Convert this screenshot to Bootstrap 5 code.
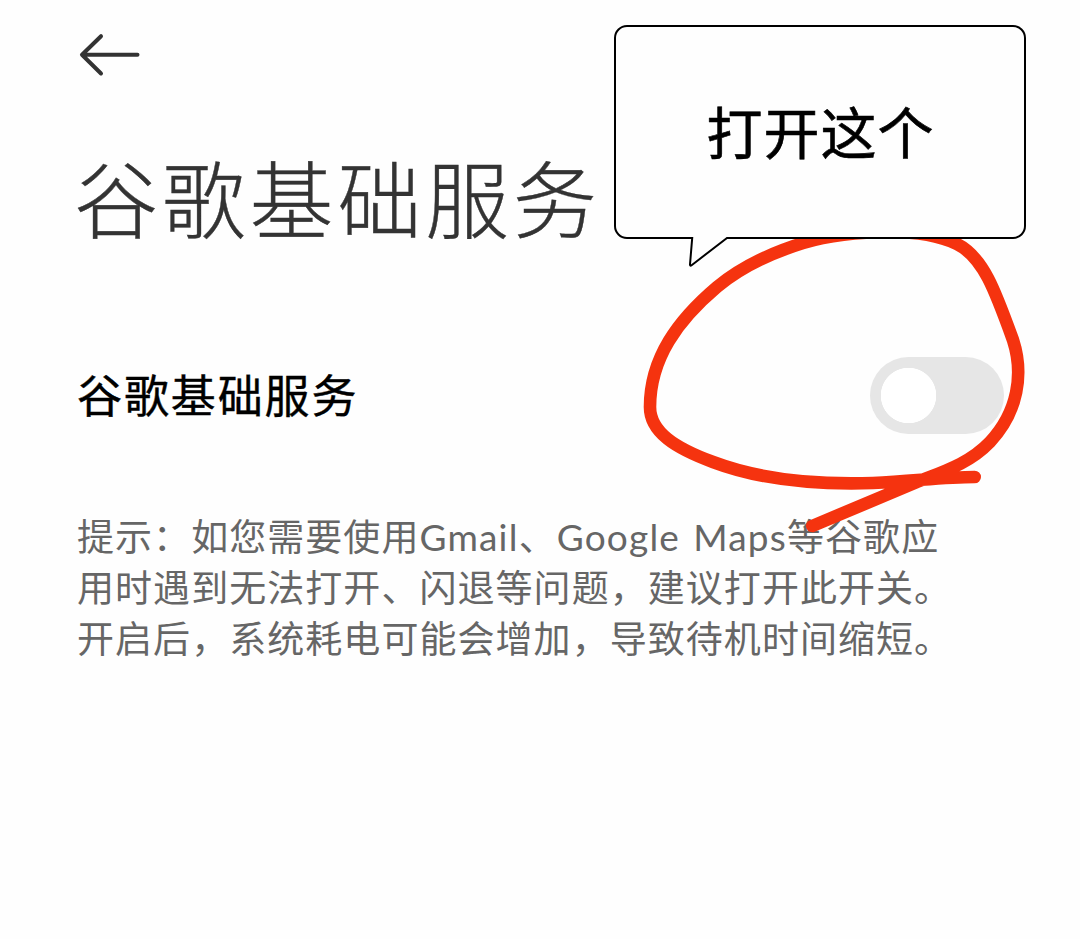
<!DOCTYPE html>
<html lang="zh-CN">

<head>
  <meta charset="UTF-8" />
  <meta name="viewport" content="width=device-width, initial-scale=1.0" />
  <title>谷歌基础服务</title>
  <link href="https://cdn.jsdelivr.net/npm/bootstrap@5.3.0/dist/css/bootstrap.min.css" rel="stylesheet" />
  <style>
    body {
      font-family: "Noto Sans CJK SC", sans-serif;
      background: #fefefe;
      color: #000;
    }

    .screen {
      width: 1080px;
      height: 939px;
      padding: 33px 76px 0;
    }

    .back-btn {
      width: 64px;
      height: 44px;
    }

    .page-title {
      font-size: 84px;
      font-weight: 300;
      line-height: 100px;
      letter-spacing: 3.8px;
      color: #333;
      margin-top: 69px;
      margin-left: -2px;
      -webkit-text-stroke: 0.4px #333;
    }

    .setting-row {
      height: 78px;
      margin-top: 110px;
    }

    .setting-name {
      font-size: 45px;
      line-height: 60px;
      letter-spacing: 1.9px;
      padding: 0 0 2px 1px;
      -webkit-text-stroke: 0.4px #000;
    }

    .form-switch .service-switch {
      width: 134px;
      height: 77px;
      margin: 0;
      border: 0;
      border-radius: 39px;
      background-color: #e6e6e6;
      background-image: radial-gradient(circle at 38.5px 38.5px, #fff 27.4px, transparent 28px);
      background-position: 0 0;
      background-size: 100% 100%;
    }

    .hint {
      font-size: 37px;
      line-height: 51px;
      letter-spacing: 1.05px;
      color: #666;
      margin-top: 76px;
      margin-left: 1px;
    }

    .latin {
      font-family: Lato, sans-serif;
      line-height: 1;
      letter-spacing: 1.2px;
      word-spacing: 2.5px;
    }

    .scribble {
      width: 1080px;
      height: 939px;
    }

    .bubble {
      left: 614px;
      top: 25px;
      width: 412px;
      height: 214px;
      border: 2px solid #000;
      border-radius: 13px;
      background: #fefefe;
      font-size: 56px;
      letter-spacing: 1px;
      -webkit-text-stroke: 0.6px #000;
    }

    .bubble-text {
      line-height: 80px;
      padding: 0 0 5px 1px;
    }

    .bubble-tail {
      left: 70px;
      top: 208px;
      width: 44px;
      height: 34px;
    }
  </style>
</head>

<body>
  <main class="screen position-relative overflow-hidden">
    <button class="back-btn btn p-0 border-0 d-block" type="button" aria-label="返回">
      <svg class="d-block" width="64" height="44" viewBox="0 0 64 44" fill="none" stroke="#333" stroke-width="4" stroke-linecap="round" stroke-linejoin="round">
        <path d="M61.5 21.8H6M25 3.2L6 21.8L25 40.5" />
      </svg>
    </button>

    <h1 class="page-title mb-0 text-nowrap">谷歌基础服务</h1>

    <div class="setting-row d-flex align-items-center justify-content-between">
      <label class="setting-name" for="service">谷歌基础服务</label>
      <div class="form-switch p-0 m-0 d-flex">
        <input class="service-switch form-check-input" type="checkbox" role="switch" id="service" />
      </div>
    </div>

    <p class="hint mb-0 text-nowrap">提示：如您需要使用<span class="latin">Gmail</span>、<span class="latin">Google Maps</span>等谷歌应<br />用时遇到无法打开、闪退等问题，建议打开此开关。<br />开启后，系统耗电可能会增加，导致待机时间缩短。</p>

    <!-- hand-drawn circle around the switch -->
    <svg class="scribble position-absolute top-0 start-0 pe-none" viewBox="0 0 1080 939" fill="none" stroke="#f5330f" stroke-width="12.6" stroke-linecap="round" stroke-linejoin="round">
      <path d="M974.7 477C945 477 915 481 873 483C812 485 758 479 713 462C675 448 650 432 650 407C650 358 678 320 717 287C741 267 771 253 803 243C830 235 861 232 890 232C915 232 938 235 957 244C983 257 995 290 1013 340C1024 374 1018 412 990 442C970 463 945 471 917 482L812.3 526" />
    </svg>

    <div class="bubble position-absolute d-flex align-items-center justify-content-center">
      <span class="bubble-text">打开这个</span>
      <svg class="bubble-tail position-absolute" viewBox="686 235 44 34">
        <path d="M692 236L689.8 265.6L690.8 265.2L727 238.2L728 236Z" fill="#fefefe" />
        <path d="M691 238H692.2L690 264.4Q690 266.4 691.6 265.2L727 238H729" fill="none" stroke="#000" stroke-width="2" />
      </svg>
    </div>
  </main>

  <script src="https://cdn.jsdelivr.net/npm/bootstrap@5.3.0/dist/js/bootstrap.bundle.min.js"></script>
</body>

</html>
